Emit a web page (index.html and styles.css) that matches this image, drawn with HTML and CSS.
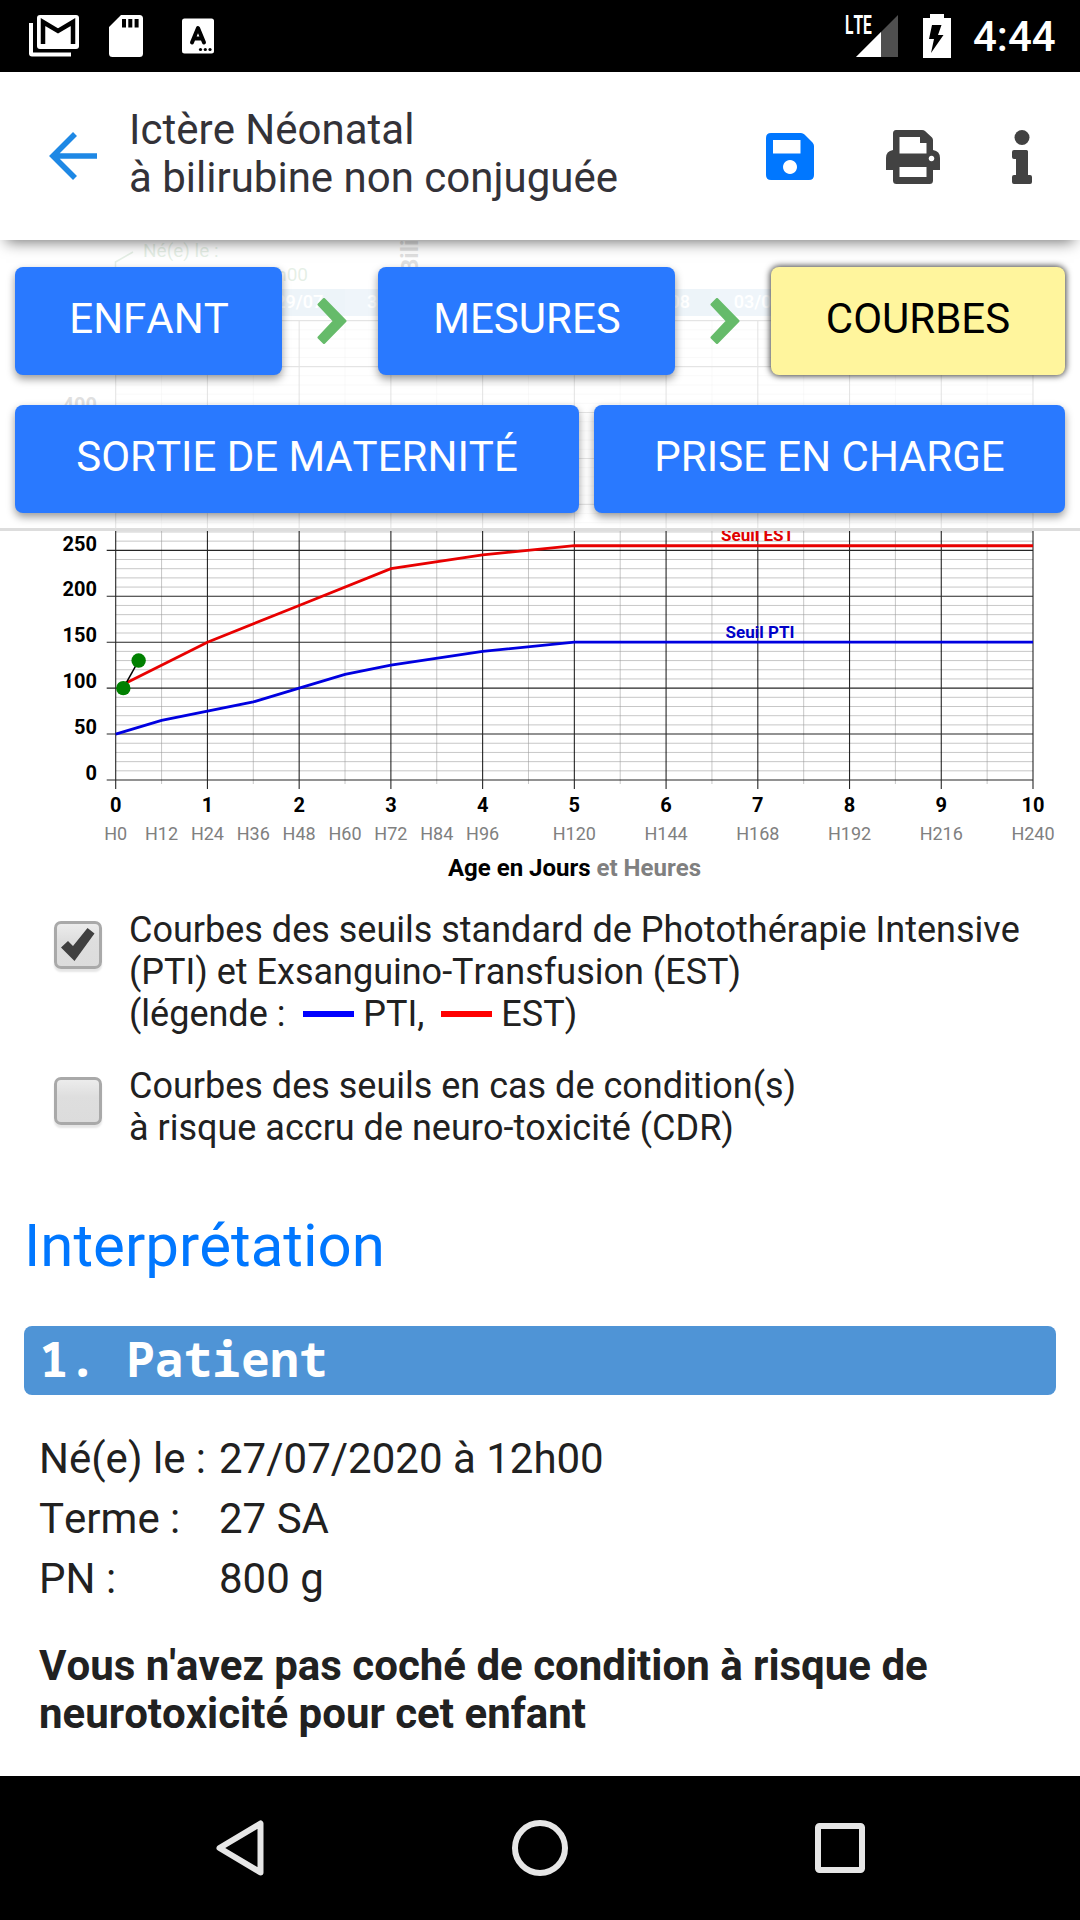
FILE: index.html
```html
<!DOCTYPE html>
<html lang="fr">
<head>
<meta charset="utf-8">
<title>Ictère Néonatal</title>
<link rel="stylesheet" href="styles.css">
</head>
<body>
<div class="app">
  <div class="status">
    <svg class="status-left" width="240" height="72" viewBox="0 0 240 72">
      <path d="M29 23h4v29.500h38v4H32a3 3 0 0 1-3-3z" fill="#fff"/>
      <rect x="37" y="15" width="42" height="34" rx="3" fill="#fff"/>
      <path d="M43 44V22l15 9 15-9v22" fill="none" stroke="#000" stroke-width="4.500"/>
      <path d="M121 15h18.500a3.500 3.500 0 0 1 3.500 3.500v35a3.500 3.500 0 0 1-3.500 3.500h-27a3.500 3.500 0 0 1-3.500-3.500V27z" fill="#fff"/>
      <path d="M122 19h4v8.500h-4zM128.300 19h4v8.500h-4zM134.600 19h4v8.500h-4z"/>
      <rect x="182" y="18.500" width="32" height="35" rx="2.500" fill="#fff"/>
      <path d="M192 42.500l6-14.500 6 14.500M194 38.500h8" fill="none" stroke="#000" stroke-width="4" stroke-linejoin="round" stroke-linecap="round"/>
      <circle cx="200.500" cy="49.500" r="1.600"/><circle cx="205.300" cy="49.500" r="1.600"/><circle cx="210" cy="49.500" r="1.600"/>
    </svg>
    <svg class="status-right" width="120" height="72" viewBox="0 0 120 72">
      <path d="M48 15v42H6z" fill="#4f4f4f"/>
      <path d="M31 32v25H6z" fill="#fff"/>
      <path d="M73 18h7v-4h14v4h7v40H73z" fill="#fff"/>
      <path d="M82 25h9.500l-3.500 10h5.500L81 53l3-14h-5z"/>
    </svg>
    <span class="lte">LTE</span>
    <span class="clock">4:44</span>
  </div>

  <header class="header">
    <svg class="back" width="50" height="50" viewBox="0 0 50 50"><path d="M49 25H5M27 3L5 25l22 22" fill="none" stroke="#1e88e5" stroke-width="5.600"/></svg>
    <h1 class="title">Ictère Néonatal<br>à bilirubine non conjuguée</h1>
    <svg class="ico-save" width="48" height="48" viewBox="0 0 48 48"><path fill="#0077ff" fill-rule="evenodd" d="M5 0h30q2 0 3.500 1.500l8 8Q48 11 48 13v29q0 5-5 5H5q-5 0-5-5V5Q0 0 5 0zM7 7v13.500h27.500V7zM24 27a7 7 0 1 0 .01 0z"/></svg>
    <svg class="ico-print" width="54" height="54" viewBox="0 0 54 54"><path fill="#424242" fill-rule="evenodd" d="M10 0h26q2 0 3 1l7 6.500q1 1 1 3V20q7 1 7 8v12h-7v10.500q0 3.500-3.500 3.500h-33Q7 54 7 50.500V40H0V28q0-7 7-8V3.500Q7 0 10 0zM13.500 7v16.500H40.500V13h-6.500V7zM13.500 37v10H40.500V37zM45.500 25.700a2.800 2.800 0 1 0 .01 0z"/></svg>
    <svg class="ico-info" width="20" height="54" viewBox="0 0 20 54"><circle cx="10" cy="7.500" r="7.500" fill="#424242"/><path fill="#424242" d="M2 20h12.500q1.500 0 1.500 1.500V45h2q2 0 2 2v5q0 2-2 2H2q-2 0-2-2v-5q0-2 2-2h2V29H2q-2 0-2-2v-5q0-2 2-2z"/></svg>
  </header>

  <main class="main">
    <svg class="chart" id="chart" width="1080" height="650" viewBox="0 0 1080 650"></svg>

    <nav class="tabs">
      <div class="tabs-row">
        <div class="tab tab-enfant">ENFANT</div>
        <svg class="chevron" width="30" height="46" viewBox="0 0 30 46"><path d="M2 6.500L7 1.500 28 23 7 44.500 2 39.500 17.500 23z" fill="#66bb6a" stroke="#66bb6a" stroke-width="3" stroke-linejoin="round"/></svg>
        <div class="tab tab-mesures">MESURES</div>
        <svg class="chevron" width="30" height="46" viewBox="0 0 30 46"><path d="M2 6.500L7 1.500 28 23 7 44.500 2 39.500 17.500 23z" fill="#66bb6a" stroke="#66bb6a" stroke-width="3" stroke-linejoin="round"/></svg>
        <div class="tab tab-courbes">COURBES</div>
      </div>
      <div class="tabs-row">
        <div class="tab tab-sortie">SORTIE DE MATERNITÉ</div>
        <div class="tab tab-prise">PRISE EN CHARGE</div>
      </div>
    </nav>

    <div class="options">
      <div class="option">
        <span class="box"><svg width="36" height="36" viewBox="0 0 36 36"><path d="M1 20.500l7-6.500 5 5L27.500 1l7 5.500L14.500 34z" fill="#404040"/></svg></span>
        <p>Courbes des seuils standard de Photothérapie Intensive<br>(PTI) et Exsanguino-Transfusion (EST)<br>(légende : <i class="dash dash-pti"></i>PTI, <i class="dash dash-est"></i>EST)</p>
      </div>
      <div class="option">
        <span class="box"></span>
        <p>Courbes des seuils en cas de condition(s)<br>à risque accru de neuro-toxicité (CDR)</p>
      </div>
    </div>

    <section class="interp">
      <h2>Interprétation</h2>
      <h3>1. Patient</h3>
      <dl class="facts">
        <dt>Né(e) le :</dt><dd>27/07/2020 à 12h00</dd>
        <dt>Terme :</dt><dd>27 SA</dd>
        <dt>PN :</dt><dd>800 g</dd>
      </dl>
      <p class="note">Vous n'avez pas coché de condition à risque de<br>neurotoxicité pour cet enfant</p>
    </section>
  </main>

  <footer class="navbar">
    <svg width="50" height="58" viewBox="0 0 50 58"><path d="M45.500 4.500v49L4.500 29z" fill="none" stroke="#e6e6e6" stroke-width="6" stroke-linejoin="round"/></svg>
    <svg width="58" height="58" viewBox="0 0 58 58"><circle cx="29" cy="29" r="25" fill="none" stroke="#e6e6e6" stroke-width="6"/></svg>
    <svg width="50" height="50" viewBox="0 0 50 50"><rect x="3" y="3" width="44" height="44" rx="1.500" fill="none" stroke="#e6e6e6" stroke-width="6"/></svg>
  </footer>
</div>
<script src="chart.js"></script>
</body>
</html>
```
FILE: styles.css
```css
* { box-sizing: border-box; margin: 0; padding: 0; }
body { background: #fff; font-family: Roboto, "Noto Sans", sans-serif; font-kerning: none; color: #212121; }
svg { display: block; flex: none; }
.app { width: 1080px; height: 1920px; display: flex; flex-direction: column; overflow: hidden; }

.status { height: 72px; background: #000; display: flex; align-items: center; position: relative; flex: none; }
.status-right { margin-left: 610px; }
.lte { position: absolute; left: 845px; top: 10px; color: #fff; font-size: 25.500px; line-height: 30px; font-weight: 700; transform: scaleX(.61); transform-origin: 0 0; }
.clock { margin-left: 3px; color: #fff; font-size: 42px; font-weight: 500; line-height: 72px; white-space: nowrap; padding-top: 2px; }

.header { height: 168px; background: #fff; display: flex; align-items: center; position: relative; z-index: 3; flex: none; box-shadow: 0 8px 14px -6px rgba(0,0,0,.55); }
.back { margin-left: 48px; }
.title { margin-left: 31px; width: 636px; font-size: 42px; line-height: 48px; font-weight: 400; color: #333238; padding-bottom: 4px; white-space: nowrap; }
.ico-save { margin-left: 1px; margin-top: 2px; }
.ico-print { margin-left: 72px; margin-top: 2px; }
.ico-info { margin-left: 72px; margin-top: 2px; }

.main { flex: 1; position: relative; overflow: hidden; }
.chart { width: 1080px; height: 650px; font-family: Roboto, sans-serif; }
.grid-minor { stroke: #999; stroke-opacity: .55; stroke-width: 1; fill: none; }
.grid-major { stroke: #000; stroke-opacity: .85; stroke-width: 1.100; fill: none; }
.curve { fill: none; stroke-width: 2.800; }
.lab { font-size: 20px; font-weight: 700; }
.hour { font-size: 18px; fill: #808080; }
.axis { font-size: 24px; font-weight: 700; }
.seuil { font-size: 17px; font-weight: 700; }
.ghost { font-size: 19px; fill: #2e7d32; }
.date { font-size: 18px; font-weight: 500; fill: #fff; }

.tabs { position: absolute; inset: 0 0 auto 0; height: 291px; background: rgba(255,255,255,.88); border-bottom: 3px solid #ddd; padding: 27px 15px 0; display: flex; flex-direction: column; gap: 30px; }
.tabs-row { display: flex; justify-content: space-between; align-items: center; }
.chevron { margin-left: 3px; }
.tab { height: 108px; padding-bottom: 6px; border-radius: 8px; background: #2979ff; color: #fff; font-size: 42px; display: flex; align-items: center; justify-content: center; box-shadow: 0 4px 8px rgba(0,0,0,.4); white-space: nowrap; }
.tab-enfant { width: 267px; padding-left: 1px; }
.tab-mesures { width: 297px; padding-left: 1px; }
.tab-courbes { width: 294px; background: #fff59d; color: #000; box-shadow: 0 0 6px 1px rgba(0,0,0,.75); }
.tab-sortie { width: 564px; }
.tab-prise { width: 471px; }

.options { padding: 19px 0 0 54px; display: flex; flex-direction: column; gap: 30px; }
.option { display: flex; align-items: flex-start; }
.option p { font-size: 36px; line-height: 42px; margin-left: 27px; white-space: nowrap; }
.box { width: 48px; height: 48px; margin-top: 12px; border: 3px solid #a9a9a9; border-radius: 7px; background: linear-gradient(#ececec, #dedede 40%, #dcdcdc); box-shadow: 0 3px 2px rgba(0,0,0,.1); display: flex; align-items: center; justify-content: center; flex: none; }
.dash { display: inline-block; width: 51px; height: 6px; vertical-align: 9px; margin: 0 9px 0 9px; }
.dash-pti { background: #00f; }
.dash-est { background: #f00; margin-left: 8px; }

.interp { padding: 62px 24px 0; }
.interp h2 { font-size: 60px; line-height: 70px; font-weight: 400; color: #0077ff; }
.interp h3 { margin-top: 45px; height: 69px; line-height: 65px; padding-left: 15.500px; background: #4f94d6; border-radius: 8px; color: #fff; font-family: "Noto Sans Mono", "DejaVu Sans Mono", monospace; font-size: 48px; font-weight: 700; }
.facts { margin: 34px 0 0 15px; display: grid; grid-template-columns: 180px 1fr; font-size: 42px; line-height: 60px; }
.note { margin: 33px 0 0 15px; font-size: 42px; line-height: 48px; font-weight: 700; white-space: nowrap; }

.navbar { height: 144px; background: #000; display: flex; align-items: center; justify-content: space-between; padding: 0 215px; flex: none; }
```
FILE: chart.js
```javascript
// Bilirubin chart: x in days (0-10), y in µmol/L (0-500)
const svg = document.getElementById('chart');
const X = d => 115.7 + d * 91.73;
const Y = v => 540 - v * 0.9187;
const out = [];
const text = (x, y, cls, anchor, s, extra = '') =>
  out.push(`<text x="${x}" y="${y}" class="${cls}" text-anchor="${anchor}" ${extra}>${s}</text>`);

for (let i = 0; i < 11; i++) {
  const a = X(Math.max(0, i - 0.5)), b = X(Math.min(10, i + 0.5));
  out.push(`<rect x="${a}" y="49" width="${b - a}" height="27" fill="${i % 2 ? '#4f94c6' : '#3f88bc'}" opacity=".75"/>`);
}
['', '28/07', '29/07', '30/07', '31/07', '01/08', '02/08', '03/08', '04/08', '05/08', '']
  .forEach((s, i) => text(X(i), 67.5, 'date', 'middle', s));

let minor = '', major = '';
for (let v = 0; v <= 500; v += 10) {
  if (v % 50) minor += `M${X(0)} ${Y(v)}H${X(10)}`;
  else major += `M106.7 ${Y(v)}H${X(10)}`;
}
for (let d = 0; d <= 10; d += 0.5) {
  if (d % 1) minor += `M${X(d)} ${Y(500)}V544`;
  else major += `M${X(d)} ${Y(500)}V549`;
}
out.push(`<path class="grid-minor" d="${minor}"/><path class="grid-major" d="${major}"/>`);

const curve = (pts, color) => out.push(
  `<polyline class="curve" stroke="${color}" points="${pts.map(([d, v]) => X(d) + ',' + Y(v)).join(' ')}"/>`);
curve([[0.08, 104], [1, 150], [2, 190], [3, 230], [4, 245], [5, 255], [10, 255]], '#e80000');
curve([[0, 50], [0.5, 65], [1, 75], [1.5, 85], [2, 100], [2.5, 115], [3, 125], [4, 140], [5, 150], [10, 150]], '#0000e0');

const a = [X(0.083), Y(100)], b = [X(0.25), Y(130)];
out.push(`<path d="M${a}L${b}" stroke="#000" stroke-width="1.5"/>`);
[a, b].forEach(p => out.push(`<circle cx="${p[0]}" cy="${p[1]}" r="7.2" fill="#008000"/>`));

for (let v = 0; v <= 450; v += 50) text(97, Y(v) + (v === 250 ? 0.7 : -0.4), 'lab', 'end', v);
for (let d = 0; d <= 10; d++) text(X(d), 571.7, 'lab', 'middle', d);
[0, 12, 24, 36, 48, 60, 72, 84, 96, 120, 144, 168, 192, 216, 240]
  .forEach(h => text(X(h / 24), 600.3, 'hour', 'middle', 'H' + h));
text(574.5, 635.5, 'axis', 'middle', 'Age en Jours <tspan fill="#808080">et Heures</tspan>');
text(757.5, 301.3, 'seuil', 'middle', 'Seuil EST', 'fill="#e00000"');
text(760, 397.7, 'seuil', 'middle', 'Seuil PTI', 'fill="#0000c8"');

out.push('<path d="M115.5 60V22L133 12" fill="none" stroke="#2e7d32" stroke-width="1.6"/>');
text(143, 17, 'ghost', 'start', 'Né(e) le :');
text(308, 40.5, 'ghost', 'end', '27/07/2020 12h00');
out.push('<text transform="translate(418 34) rotate(-90)" font-size="24" font-weight="700">Bilirubine (µmol/L)</text>');
svg.innerHTML = out.join('');
```
